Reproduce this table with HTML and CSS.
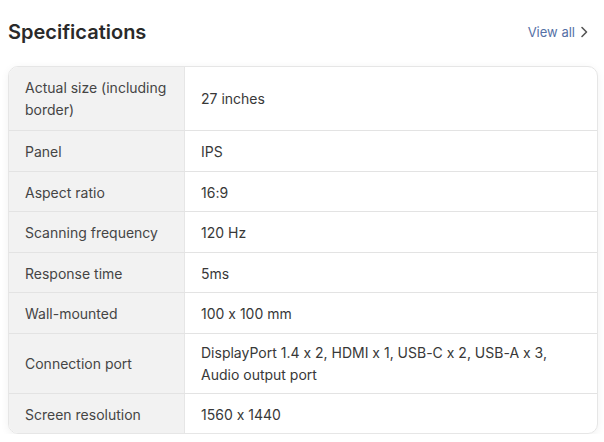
FILE: index.html
```html
<!DOCTYPE html>
<html lang="en">
<head>
<meta charset="utf-8">
<link rel="stylesheet" href="styles.css">
</head>
<body>
<section class="specs">
  <header class="specs-head">
    <h2 class="specs-title">Specifications</h2>
    <a class="view-all" href="#">View all
      <svg class="chev" width="8" height="12" viewBox="0 0 8 12"><path d="M2 1.5 L6.5 6 L2 10.5" fill="none" stroke="currentColor" stroke-width="1.6" stroke-linecap="round" stroke-linejoin="round"/></svg>
    </a>
  </header>
  <div class="specs-table">
    <div class="row tall"><div class="label">Actual size (including border)</div><div class="value">27 inches</div></div>
    <div class="row"><div class="label">Panel</div><div class="value">IPS</div></div>
    <div class="row"><div class="label">Aspect ratio</div><div class="value">16:9</div></div>
    <div class="row"><div class="label">Scanning frequency</div><div class="value">120 Hz</div></div>
    <div class="row"><div class="label">Response time</div><div class="value">5ms</div></div>
    <div class="row"><div class="label">Wall-mounted</div><div class="value">100 x 100 mm</div></div>
    <div class="row wrap"><div class="label">Connection port</div><div class="value">DisplayPort 1.4 x 2, HDMI x 1, USB-C x 2, USB-A x 3, Audio output port</div></div>
    <div class="row last"><div class="label">Screen resolution</div><div class="value">1560 x 1440</div></div>
  </div>
</section>
</body>
</html>
```
FILE: styles.css
```css
* { box-sizing: border-box; }
html, body { margin: 0; padding: 0; background: #ffffff; }
body {
  font-family: Inter, "Noto Sans", Arial, sans-serif;
  font-feature-settings: "calt" 0;
  color: #333;
}
.specs {
  width: 590px;
  margin: 0 0 0 8px;
  padding-top: 18px;
}
.specs-head {
  display: flex;
  align-items: center;
  justify-content: space-between;
  height: 28px;
  margin-bottom: 20px;
}
.specs-title {
  margin: 0;
  font-size: 20px;
  font-weight: 600;
  color: #2a2a2a;
}
.view-all {
  display: flex;
  align-items: center;
  gap: 5px;
  margin-right: 10px;
  font-size: 13px;
  color: #5570a6;
  text-decoration: none;
}
.chev { color: #555; }
.specs-table {
  border: 1px solid #e6e6e6;
  border-radius: 10px;
  overflow: hidden;
  box-shadow: 0 2px 8px rgba(0,0,0,0.06);
}
.row {
  display: grid;
  grid-template-columns: 176px 1fr;
  border-bottom: 1px solid #e3e3e3;
  font-size: 14px;
  line-height: 22px;
}
.row.last { border-bottom: none; }
.label {
  background: #f2f2f2;
  color: #454545;
  padding: 10px 16px 7.5px;
  border-right: 1px solid #e6e6e6;
  display: flex;
  align-items: center;
}
.value {
  color: #383838;
  padding: 10px 16px 7.5px;
  display: flex;
  align-items: center;
}
.row.tall .label, .row.tall .value { padding-top: 9.5px; padding-bottom: 9.5px; }
.row.wrap .label, .row.wrap .value { padding-top: 8.5px; padding-bottom: 6.5px; }
```
